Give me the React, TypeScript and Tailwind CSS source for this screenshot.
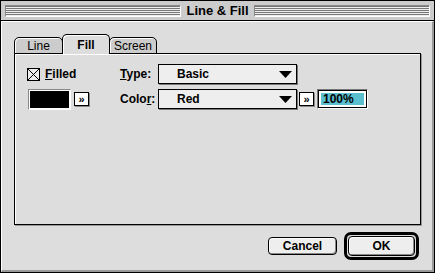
function Stripes() {
  return (
    <div className="flex-1 h-[12px] border-t border-l border-[#888] border-r border-b border-r-white border-b-white bg-[repeating-linear-gradient(#777_0px,#777_1px,#eee_1px,#eee_2px)]" />
  );
}

function Arrows({ className = "" }: { className?: string }) {
  return (
    <div
      className={`w-[15px] h-[14px] bg-white border border-black flex items-center justify-center text-[11px] font-bold leading-none shadow-[1px_1px_0_#888] ${className}`}
    >
      »
    </div>
  );
}

function Dropdown({ label }: { label: string }) {
  return (
    <div className="w-[139px] h-[20px] bg-[#eee] border border-black shadow-[1px_1px_0_#777] flex items-center pl-[18px] pr-[4px]">
      <span className="flex-1 text-[12px] font-bold">{label}</span>
      <svg width="13" height="7" viewBox="0 0 13 7">
        <polygon points="0,0 13,0 6.5,7" fill="#000" />
      </svg>
    </div>
  );
}

export default function App() {
  const tabs = [
    { name: "Line", active: false, w: "w-[49px]" },
    { name: "Fill", active: true, w: "w-[48px]" },
    { name: "Screen", active: false, w: "w-[48px]" },
  ];

  return (
    <div className="w-[435px] h-[273px] bg-[#ddd] border border-black flex flex-col font-['Liberation_Sans',Arial,sans-serif] text-black">
      {/* title bar */}
      <div className="h-[20px] bg-[#ccc] border-b border-black flex items-center px-[4px] gap-[4px]">
        <Stripes />
        <span className="text-[13px] font-bold leading-none px-[1px]">Line &amp; Fill</span>
        <Stripes />
      </div>

      {/* content */}
      <div className="flex-1 flex flex-col border-l border-t border-white border-r-2 border-b-2 border-r-[#999] border-b-[#999] pl-[12px] pr-[11px] pt-[12px]">
        {/* tabs */}
        <div className="flex items-end h-[20px] -mb-[1px] relative z-10">
          {tabs.map((t) => (
            <div
              key={t.name}
              className={
                t.active
                  ? `${t.w} h-[20px] -mx-[1px] relative z-20 bg-[#ddd] border border-black border-b-0 rounded-t-[5px] shadow-[inset_1px_1px_0_#fff] flex justify-center pt-[4px] text-[12px] leading-none font-bold`
                  : `${t.w} h-[17px] bg-[#ccc] border border-black rounded-t-[5px] shadow-[inset_1px_1px_0_#fff] flex justify-center pt-[2px] text-[12px] leading-none`
              }
            >
              {t.name}
            </div>
          ))}
        </div>

        {/* panel */}
        <div className="h-[172px] bg-[#ddd] border border-black shadow-[1px_1px_0_#999,inset_1px_1px_0_#fff] pt-[10px] flex flex-col gap-[5px]">
          <div className="flex items-center h-[20px]">
            <div className="w-[105px] pl-[12px] flex items-center">
              <div className="w-[13px] h-[13px] border border-black bg-[#eee]">
                <svg width="11" height="11" viewBox="0 0 11 11" className="block">
                  <line x1="0" y1="0" x2="11" y2="11" stroke="#000" strokeWidth="1" />
                  <line x1="11" y1="0" x2="0" y2="11" stroke="#000" strokeWidth="1" />
                </svg>
              </div>
              <span className="ml-[5px] text-[12px] font-bold">
                <span className="underline">F</span>illed
              </span>
            </div>
            <span className="w-[38px] text-[12px] font-bold">
              <span className="underline">T</span>ype:
            </span>
            <Dropdown label="Basic" />
          </div>

          <div className="flex items-center h-[20px]">
            <div className="w-[105px] pl-[13px] flex items-center">
              <div className="w-[43px] h-[21px] border border-[#888] border-r-white border-b-white p-[1px] bg-white">
                <div className="w-full h-full bg-black" />
              </div>
              <Arrows className="ml-[3px]" />
            </div>
            <span className="w-[38px] text-[12px] font-bold">
              Colo<span className="underline">r</span>:
            </span>
            <Dropdown label="Red" />
            <Arrows className="ml-[2px]" />
            <div className="ml-[3px] w-[51px] h-[20px] border border-[#777] border-r-white border-b-white">
              <div className="w-full h-full border border-black bg-white p-[2px]">
                <div className="w-full h-full bg-[#5bbfcf] flex items-center pl-[2px] text-[12px] font-bold leading-none">
                  100%
                </div>
              </div>
            </div>
          </div>
        </div>

        {/* buttons */}
        <div className="flex justify-end items-center gap-[7px] pr-[2px] mt-[7px]">
          <div className="w-[69px] h-[18px] bg-[#eee] border border-black rounded-[4px] shadow-[inset_-1px_-1px_0_#888,inset_1px_1px_0_#fff] flex items-center justify-center text-[12px] font-bold">
            Cancel
          </div>
          <div className="w-[75px] h-[28px] border-[3px] border-black rounded-[7px] p-[1px] flex">
            <div className="flex-1 bg-[#eee] border border-black rounded-[4px] shadow-[inset_-1px_-1px_0_#888,inset_1px_1px_0_#fff] flex items-center justify-center text-[12px] font-bold">
              OK
            </div>
          </div>
        </div>
      </div>
    </div>
  );
}
